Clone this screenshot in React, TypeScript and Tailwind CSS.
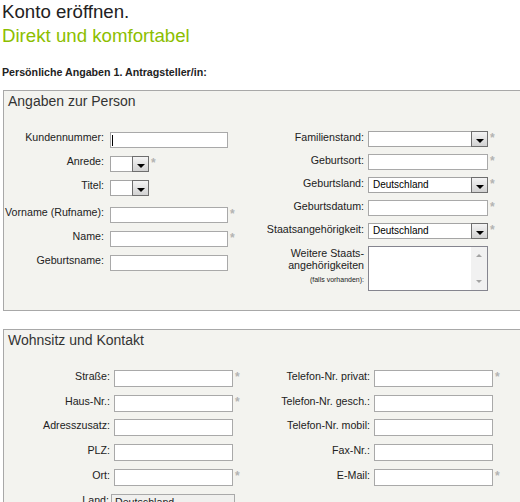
import React from 'react';

interface RowProps {
  label: React.ReactNode;
  labelClass: string;
  className?: string;
  children: React.ReactNode;
}

function Row({ label, labelClass, className = '', children }: RowProps) {
  return (
    <div className={`flex items-start ${className}`}>
      <div
        className={`flex shrink-0 justify-end whitespace-nowrap text-right text-[8pt] leading-[12px] text-[#222] ${labelClass}`}
      >
        <div>{label}</div>
      </div>
      {children}
    </div>
  );
}

function Star() {
  return <span className="ml-[2px] mt-[1px] text-[12px] font-bold leading-[12px] text-[#b3b3b3]">*</span>;
}

function Field({ className, caret }: { className: string; caret?: boolean }) {
  return (
    <div className={`relative shrink-0 border border-[#a9a9a9] bg-white ${className}`}>
      <input type="text" className="h-full w-full outline-none" />
      {caret && <span className="absolute left-[1px] top-[2px] h-[11px] w-px bg-black" />}
    </div>
  );
}

function Select({ className, value }: { className: string; value?: string }) {
  return (
    <div className={`flex h-[16px] shrink-0 ${className}`}>
      <span className="flex-1 border-y border-l border-[#a5a5a5] bg-white pl-[4px] text-[10px] leading-[14px] text-black">
        {value}
      </span>
      <span className="flex w-[17px] items-end justify-center border border-[#6e6e6e] bg-linear-to-b from-[#f4f4f4] to-[#d2d2d2] pb-[3px]">
        <span className="h-0 w-0 border-x-[4px] border-t-[4px] border-x-transparent border-t-black" />
      </span>
    </div>
  );
}

function TextArea() {
  return (
    <div className="flex h-[45px] w-[120px] shrink-0 border border-[#85858f] bg-white">
      <div className="flex-1" />
      <div className="flex w-[16px] flex-col items-center justify-between bg-[#f1f1f1] py-[7px]">
        <span className="h-0 w-0 border-x-[3px] border-b-[3px] border-x-transparent border-b-[#a3a3a3]" />
        <span className="h-0 w-0 border-x-[3px] border-t-[3px] border-x-transparent border-t-[#a3a3a3]" />
      </div>
    </div>
  );
}

export default function App() {
  return (
    <div className="h-[502px] w-[520px] overflow-hidden bg-white font-['Liberation_Sans',Arial,sans-serif]">
      <h1 className="ml-[2px] text-[18.67px] leading-[24px] text-[#222]">Konto eröffnen.</h1>
      <h2 className="ml-[2px] text-[18.67px] leading-[24px] text-[#8cbe00]">Direkt und komfortabel</h2>
      <p className="ml-[2px] mt-[18px] text-[8pt] font-bold leading-[13px] text-[#222]">
        Persönliche Angaben 1. Antragsteller/in:
      </p>

      <section className="ml-[3px] mt-[11px] w-[540px] border border-[#a8a8a8] bg-[#f3f3ef] pb-[19px] pl-[4px] pt-[2px]">
        <h3 className="text-[14px] leading-[16px] text-[#333]">Angaben zur Person</h3>
        <div className="mt-[22px] flex">
          <div className="flex w-[233px] flex-col pt-[1px]">
            <Row label="Kundennummer:" labelClass="w-[96px] -mt-px">
              <Field className="ml-[6px] h-[16px] w-[118px]" caret />
            </Row>
            <Row label="Anrede:" labelClass="w-[96px] -mt-px" className="mt-[8px]">
              <Select className="ml-[6px] w-[39px]" />
              <Star />
            </Row>
            <Row label="Titel:" labelClass="w-[96px] -mt-px" className="mt-[8px]">
              <Select className="ml-[6px] w-[39px]" />
            </Row>
            <Row label="Vorname (Rufname):" labelClass="w-[96px] -mt-px" className="mt-[11px]">
              <Field className="ml-[6px] h-[16px] w-[118px]" />
              <Star />
            </Row>
            <Row label="Name:" labelClass="w-[96px] -mt-px" className="mt-[8px]">
              <Field className="ml-[6px] h-[16px] w-[118px]" />
              <Star />
            </Row>
            <Row label="Geburtsname:" labelClass="w-[96px] -mt-px" className="mt-[8px]">
              <Field className="ml-[6px] h-[16px] w-[118px]" />
            </Row>
          </div>

          <div className="flex flex-col gap-[7px]">
            <Row label="Familienstand:" labelClass="w-[123px]">
              <Select className="ml-[4px] w-[120px]" />
              <Star />
            </Row>
            <Row label="Geburtsort:" labelClass="w-[123px]">
              <Field className="ml-[4px] h-[16px] w-[120px]" />
              <Star />
            </Row>
            <Row label="Geburtsland:" labelClass="w-[123px]">
              <Select className="ml-[4px] w-[120px]" value="Deutschland" />
              <Star />
            </Row>
            <Row label="Geburtsdatum:" labelClass="w-[123px]">
              <Field className="ml-[4px] h-[16px] w-[120px]" />
              <Star />
            </Row>
            <Row label="Staatsangehörigkeit:" labelClass="w-[123px]">
              <Select className="ml-[4px] w-[120px]" value="Deutschland" />
              <Star />
            </Row>
            <Row
              label={
                <>
                  <span className="mt-[1px] block">Weitere Staats-</span>
                  <span className="block">angehörigkeiten</span>
                  <span className="block text-[7px] leading-[18px]">(falls vorhanden):</span>
                </>
              }
              labelClass="w-[123px]"
            >
              <div className="ml-[4px]">
                <TextArea />
              </div>
            </Row>
          </div>
        </div>
      </section>

      <section className="ml-[3px] mt-[18px] w-[540px] border border-[#a8a8a8] bg-[#f3f3ef] pb-[19px] pl-[4px] pt-[2px]">
        <h3 className="text-[14px] leading-[16px] text-[#333]">Wohnsitz und Kontakt</h3>
        <div className="mt-[22px] flex">
          <div className="flex w-[238px] flex-col">
            <Row label="Straße:" labelClass="w-[102px]">
              <Field className="ml-[4px] h-[17px] w-[119px]" />
              <Star />
            </Row>
            <Row label="Haus-Nr.:" labelClass="w-[102px]" className="mt-[8px]">
              <Field className="ml-[4px] h-[17px] w-[119px]" />
              <Star />
            </Row>
            <Row label="Adresszusatz:" labelClass="w-[102px]" className="mt-[7px]">
              <Field className="ml-[4px] h-[17px] w-[119px]" />
            </Row>
            <Row label="PLZ:" labelClass="w-[102px]" className="mt-[8px]">
              <Field className="ml-[4px] h-[17px] w-[119px]" />
            </Row>
            <Row label="Ort:" labelClass="w-[102px]" className="mt-[8px]">
              <Field className="ml-[4px] h-[17px] w-[119px]" />
              <Star />
            </Row>
            <Row label="Land:" labelClass="w-[101px]" className="mt-[8px]">
              <div className="ml-[2px] h-[17px] w-[124px] border border-[#a9a9a9] bg-[#f0f0ee] pl-[3px] text-[8pt] leading-[15px] text-[#222]">
                Deutschland
              </div>
            </Row>
          </div>

          <div className="flex flex-col">
            <Row label="Telefon-Nr. privat:" labelClass="w-[124px]">
              <Field className="ml-[4px] h-[17px] w-[119px]" />
              <Star />
            </Row>
            <Row label="Telefon-Nr. gesch.:" labelClass="w-[124px]" className="mt-[8px]">
              <Field className="ml-[4px] h-[17px] w-[119px]" />
            </Row>
            <Row label="Telefon-Nr. mobil:" labelClass="w-[124px]" className="mt-[7px]">
              <Field className="ml-[4px] h-[17px] w-[119px]" />
            </Row>
            <Row label="Fax-Nr.:" labelClass="w-[124px]" className="mt-[8px]">
              <Field className="ml-[4px] h-[17px] w-[119px]" />
            </Row>
            <Row label="E-Mail:" labelClass="w-[124px]" className="mt-[8px]">
              <Field className="ml-[4px] h-[17px] w-[119px]" />
              <Star />
            </Row>
          </div>
        </div>
      </section>
    </div>
  );
}
